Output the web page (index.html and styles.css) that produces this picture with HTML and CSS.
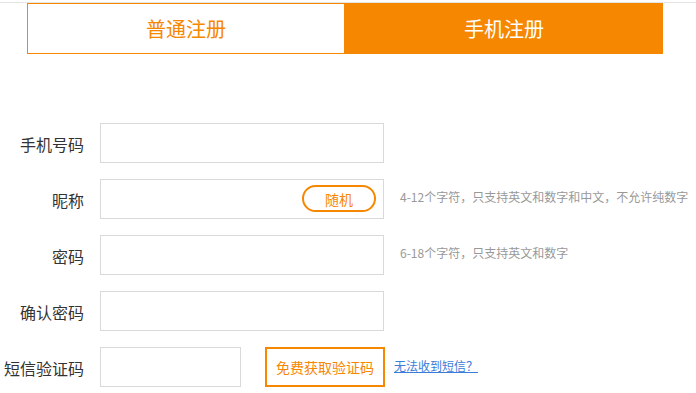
FILE: index.html
```html
<!DOCTYPE html>
<html lang="zh-CN">
<head>
    <meta charset="UTF-8">
    <meta name="viewport" content="width=device-width, initial-scale=1.0">
    <title>注册</title>
    <link rel="stylesheet" href="styles.css">
</head>
<body>
    <div class="page">
        <div class="reg-tabs">
            <a class="reg-tab" href="#">普通注册</a>
            <a class="reg-tab active" href="#">手机注册</a>
        </div>

        <form class="reg-form">
            <div class="form-row">
                <label>手机号码</label>
                <input type="text" class="field">
            </div>
            <div class="form-row">
                <label>昵称</label>
                <div class="field-wrap">
                    <input type="text" class="field">
                    <button type="button" class="btn-random">随机</button>
                </div>
                <span class="hint">4-12个字符，只支持英文和数字和中文，不允许纯数字</span>
            </div>
            <div class="form-row">
                <label>密码</label>
                <input type="password" class="field">
                <span class="hint">6-18个字符，只支持英文和数字</span>
            </div>
            <div class="form-row">
                <label>确认密码</label>
                <input type="password" class="field">
            </div>
            <div class="form-row">
                <label>短信验证码</label>
                <input type="text" class="field field-short">
                <button type="button" class="btn-code">免费获取验证码</button>
                <a class="no-sms" href="#">无法收到短信？</a>
            </div>
        </form>
    </div>
</body>
</html>
```

FILE: styles.css
```css
/* Base styles */
:root {
    --orange: #f68700;
    --text-dark: #333333;
    --text-light: #999999;
    --line: #d9d9d9;
    --link: #3b7dd8;
}

* {
    margin: 0;
    padding: 0;
    box-sizing: border-box;
}

body {
    font-family: "Noto Sans CJK SC", "Noto Sans", sans-serif;
    background: #ffffff;
    color: var(--text-dark);
}

.page {
    margin-top: 2px;
    border-top: 1px solid #e5e5e5;
}

/* Tabs */
.reg-tabs {
    display: flex;
    width: 636px;
    height: 51px;
    margin-left: 27px;
}

.reg-tab {
    flex: 1;
    display: flex;
    align-items: center;
    justify-content: center;
    font-size: 20px;
    color: var(--orange);
    text-decoration: none;
    border: 1px solid #f68700;
}

.reg-tab.active {
    background: var(--orange);
    color: #ffffff;
}

/* Form */
.reg-form {
    display: flex;
    flex-direction: column;
    gap: 16px;
    margin-top: 69px;
}

.form-row {
    display: flex;
    align-items: center;
    height: 40px;
}

.form-row label {
    width: 84px;
    margin-right: 16px;
    text-align: right;
    font-size: 16px;
    padding-top: 2px;
    white-space: nowrap;
}

.field {
    width: 284px;
    height: 40px;
    border: 1px solid var(--line);
    outline: none;
    font-size: 14px;
    padding: 0 10px;
}

.field-short {
    width: 141px;
}

.field-wrap {
    position: relative;
    display: flex;
}

.btn-random {
    position: absolute;
    top: 6px;
    right: 8px;
    width: 74px;
    height: 27px;
    border: 2px solid var(--orange);
    border-radius: 14px;
    background: #ffffff;
    color: var(--orange);
    font-family: inherit;
    font-size: 14px;
    cursor: pointer;
}

.hint {
    margin-left: 16px;
    margin-bottom: 6px;
    font-size: 12px;
    color: var(--text-light);
    white-space: nowrap;
}

.btn-code {
    width: 120px;
    height: 40px;
    margin-left: 24px;
    border: 2px solid var(--orange);
    background: #ffffff;
    color: var(--orange);
    font-family: inherit;
    font-size: 14px;
    cursor: pointer;
}

.no-sms {
    margin-left: 9px;
    margin-bottom: 4px;
    font-size: 12px;
    color: var(--link);
}
```
